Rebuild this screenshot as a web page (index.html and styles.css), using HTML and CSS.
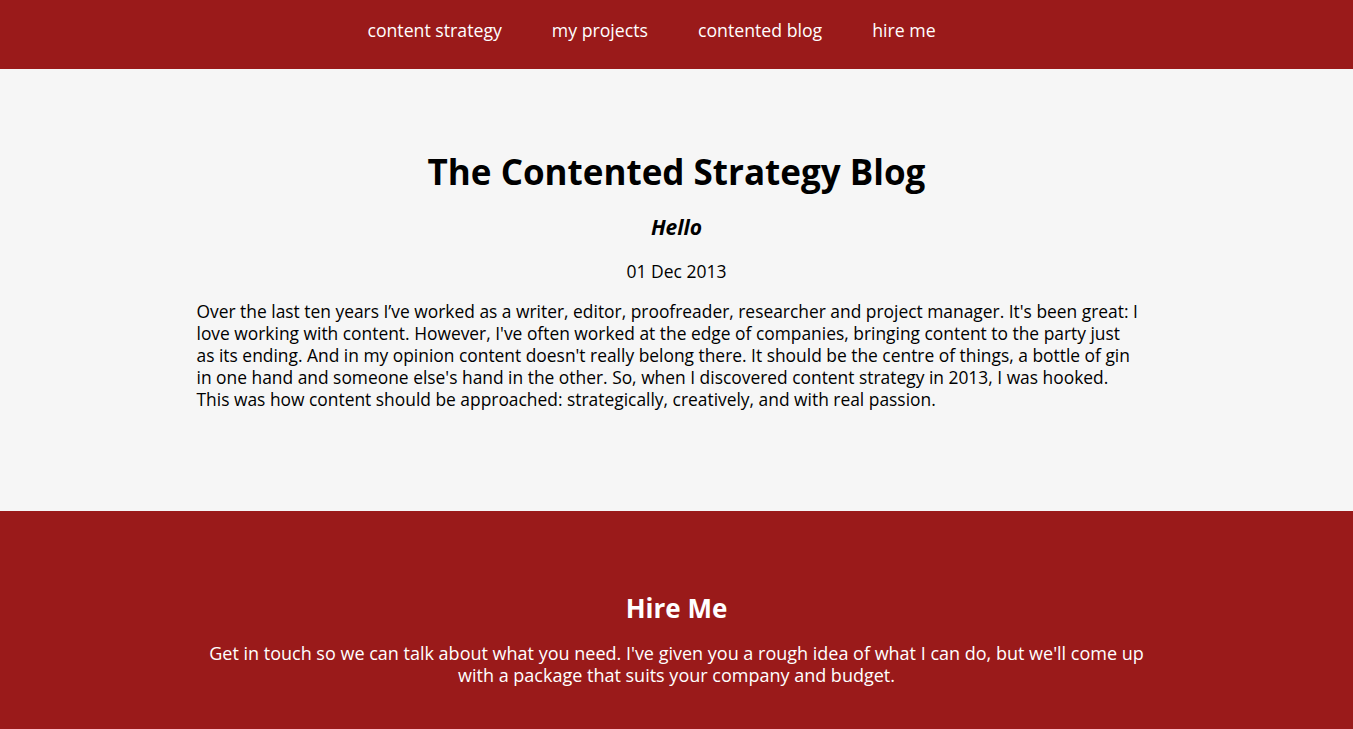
FILE: index.html
```html
<!DOCTYPE html>
<html lang="en">
<head>
<meta charset="utf-8">
<title>The Contented Strategy Blog</title>
<link rel="stylesheet" href="styles.css">
</head>
<body>
<header class="topbar">
  <nav>
    <ul class="nav">
      <li><a href="#">content strategy</a></li>
      <li><a href="#">my projects</a></li>
      <li><a href="#">contented blog</a></li>
      <li><a href="#">hire me</a></li>
    </ul>
  </nav>
</header>
<main class="blog">
  <div class="container">
    <h1 class="blog-title">The Contented Strategy Blog</h1>
    <h2 class="post-title">Hello</h2>
    <p class="post-date">01 Dec 2013</p>
    <p class="post-body">Over the last ten years I’ve worked as a writer, editor, proofreader, researcher and project manager. It's been great: I love working with content. However, I've often worked at the edge of companies, bringing content to the party just as its ending. And in my opinion content doesn't really belong there. It should be the centre of things, a bottle of gin in one hand and someone else's hand in the other. So, when I discovered content strategy in 2013, I was hooked. This was how content should be approached: strategically, creatively, and with real passion.</p>
  </div>
</main>
<footer class="hire">
  <div class="container">
    <h2 class="hire-title">Hire Me</h2>
    <p class="hire-text">Get in touch so we can talk about what you need. I've given you a rough idea of what I can do, but we'll come up with a package that suits your company and budget.</p>
  </div>
</footer>
</body>
</html>
```
FILE: styles.css
```css
* { box-sizing: border-box; }
html, body { margin: 0; padding: 0; }
body {
  font-family: "Open Sans", "Noto Sans", sans-serif;
  background: #f6f6f6;
  color: #000;
}
.topbar {
  background: #9a1a1a;
  height: 69px;
}
.nav {
  list-style: none;
  margin: 0;
  padding: 0 0 10px;
  display: flex;
  justify-content: center;
  align-items: center;
  height: 69px;
}
.nav li { margin-right: 50px; }
.nav a {
  color: #fff;
  text-decoration: none;
  font-size: 17.7px;
}
.container {
  width: 960px;
  margin: 0 auto;
}
.blog {
  padding: 79px 0 101px;
}
.blog-title {
  margin: 0;
  text-align: center;
  font-size: 35px;
  font-weight: 700;
}
.post-title {
  margin: 18px 0 0;
  text-align: center;
  font-size: 21px;
  font-style: italic;
  font-weight: 700;
}
.post-date {
  margin: 18px 0 0;
  text-align: center;
  font-size: 17.5px;
}
.post-body {
  margin: 17px 0 0;
  padding-right: 17px;
  font-size: 17.4px;
  line-height: 22px;
}
.hire {
  background: #9a1a1a;
  color: #fff;
  padding: 79px 0 60px;
}
.hire-title {
  margin: 0;
  text-align: center;
  font-size: 26px;
  font-weight: 700;
}
.hire-text {
  margin: 16px 0 0;
  text-align: center;
  font-size: 18px;
  line-height: 22px;
}
```
